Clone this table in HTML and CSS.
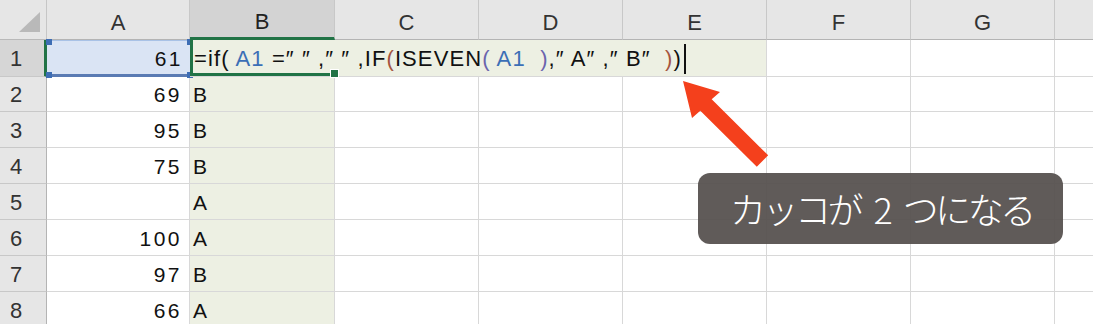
FILE: index.html
```html
<!DOCTYPE html>
<html lang="ja">
<head>
<meta charset="utf-8">
<link rel="stylesheet" href="styles.css">
</head>
<body>
<div class="stage">
  <div class="sheet">
    <div class="corner"><span class="tri"></span></div>
    <div class="ch">A</div>
    <div class="ch sel">B</div>
    <div class="ch">C</div>
    <div class="ch">D</div>
    <div class="ch">E</div>
    <div class="ch">F</div>
    <div class="ch">G</div>
    <div class="ch last"></div>

    <div class="rh sel">1</div>
    <div class="c num ref">61<i class="h tl"></i><i class="h tr"></i><i class="h bl"></i><i class="h br"></i></div>
    <div class="c edit"><span class="f">=if( <span class="blue">A1</span> =″ ″ ,″ ″ ,IF<span class="p1">(</span>ISEVEN<span class="p2">(</span> <span class="blue">A1</span>  <span class="p2">)</span>,″ A″ ,″ B″  <span class="p1">)</span>)</span><span class="caret"></span><i class="fill"></i></div>
    <div class="c"></div><div class="c"></div><div class="c last"></div>

    <div class="rh">2</div><div class="c num">69</div><div class="c colb">B</div><div class="c"></div><div class="c"></div><div class="c"></div><div class="c"></div><div class="c"></div><div class="c last"></div>
    <div class="rh">3</div><div class="c num">95</div><div class="c colb">B</div><div class="c"></div><div class="c"></div><div class="c"></div><div class="c"></div><div class="c"></div><div class="c last"></div>
    <div class="rh">4</div><div class="c num">75</div><div class="c colb">B</div><div class="c"></div><div class="c"></div><div class="c"></div><div class="c"></div><div class="c"></div><div class="c last"></div>
    <div class="rh">5</div><div class="c num"></div><div class="c colb">A</div><div class="c"></div><div class="c"></div><div class="c"></div><div class="c"></div><div class="c"></div><div class="c last"></div>
    <div class="rh">6</div><div class="c num">100</div><div class="c colb">A</div><div class="c"></div><div class="c"></div><div class="c"></div><div class="c"></div><div class="c"></div><div class="c last"></div>
    <div class="rh">7</div><div class="c num">97</div><div class="c colb">B</div><div class="c"></div><div class="c"></div><div class="c"></div><div class="c"></div><div class="c"></div><div class="c last"></div>
    <div class="rh">8</div><div class="c num">66</div><div class="c colb">A</div><div class="c"></div><div class="c"></div><div class="c"></div><div class="c"></div><div class="c"></div><div class="c last"></div>
  </div>

  <svg class="arrow" width="1093" height="324" viewBox="0 0 1093 324">
    <polygon points="683,81 720,92 711.7,99.3 768.2,155.3 756.8,166.7 700.3,110.7 692,118" fill="#f4401c"/>
  </svg>

  <div class="callout">カッコが 2 つになる</div>
</div>
</body>
</html>
```

FILE: styles.css
```css
* { box-sizing: border-box; }
html, body { margin: 0; padding: 0; background: #fff; }
body { width: 1093px; height: 324px; overflow: hidden; }

.stage { position: relative; width: 1093px; height: 324px; }

.sheet {
  display: grid;
  grid-template-columns: 47px 143px 145px 144px 144px 144px 144px 144px 1fr;
  grid-template-rows: 40px 37px 35px 36px 36px 36px 36px 36px 36px;
  font-family: "Liberation Sans", Arial, sans-serif;
  font-size: 21px;
  color: #111;
}

.corner {
  background: #e6e6e6;
  border-right: 1px solid #c6c6c6;
  border-bottom: 1px solid #b9b9b9;
  position: relative;
}
.corner .tri {
  position: absolute;
  right: 6px;
  bottom: 7px;
  width: 0; height: 0;
  border-left: 21px solid transparent;
  border-bottom: 20px solid #b9b9b9;
}

.ch {
  background: #e6e6e6;
  border-right: 1px solid #c8c8c8;
  border-bottom: 1px solid #b4b4b4;
  display: flex;
  align-items: center;
  justify-content: center;
  padding-top: 6px;
  color: #333;
  font-size: 22px;
}
.ch.sel {
  background: #d3d3d3;
  border-bottom: 3px solid #217346;
  color: #222;
}
.ch.last { border-right: none; }

.rh {
  background: #e6e6e6;
  border-right: 1px solid #b4b4b4;
  border-bottom: 1px solid #c8c8c8;
  display: flex;
  align-items: center;
  padding-left: 10px;
  padding-top: 2px;
  color: #333;
  font-size: 22px;
}
.rh.sel {
  background: #d6d6d6;
  border-right: 3px solid #217346;
}

.c {
  border-right: 1px solid #d8d8d8;
  border-bottom: 1px solid #d8d8d8;
  display: flex;
  align-items: center;
  padding-top: 2px;
  white-space: nowrap;
  letter-spacing: 1.5px;
}
.c.last { border-right: none; }
.c.num { justify-content: flex-end; padding-right: 7px; letter-spacing: 2.5px; }
.c.colb { background: #edf0e3; padding-left: 3px; }

.c.ref {
  position: relative;
  background: #dae4f4;
  border-top: 1px solid #a9c2e6;
  border-bottom: 3px solid #5a7bb3;
  border-right: none;
}
.h {
  position: absolute;
  width: 6px; height: 6px;
  background: #3d6db4;
}
.h.tl { left: -1px; top: -2px; }
.h.tr { right: -3px; top: -2px; }
.h.bl { left: -1px; bottom: -4px; }
.h.br { right: -3px; bottom: -4px; }

.c.edit {
  grid-column: span 4;
  position: relative;
  background: #edf0e3;
  padding-left: 4px;
  letter-spacing: 1.1px;
}
.c.edit .fill {
  position: absolute;
  left: 0; top: -3px;
  width: 145px;
  height: calc(100% + 3px);
  border-left: 3px solid #217346;
  border-bottom: 3px solid #217346;
  pointer-events: none;
}
.c.edit .fill::after {
  content: "";
  position: absolute;
  right: -4px; bottom: -5px;
  width: 7px; height: 7px;
  background: #217346;
  border: 1px solid #fff;
}
.f { font-size: 22px; white-space: pre; }
.blue { color: #3c6fb6; }
.p1 { color: #a5553f; }
.p2 { color: #6b64ad; }
.caret {
  display: inline-block;
  width: 2px;
  height: 30px;
  background: #111;
  margin-left: 2px;
}

.arrow { position: absolute; left: 0; top: 0; pointer-events: none; }

.callout {
  position: absolute;
  left: 698px;
  top: 173px;
  width: 365px;
  height: 71px;
  border-radius: 12px;
  background: rgba(84, 79, 76, 0.93);
  color: #fff;
  font-family: "Noto Sans CJK JP", "Noto Sans", sans-serif;
  font-weight: 300;
  font-size: 36px;
  letter-spacing: -3.5px;
  word-spacing: 9px;
  line-height: 71px;
  padding-left: 32px;
  white-space: nowrap;
}
```
